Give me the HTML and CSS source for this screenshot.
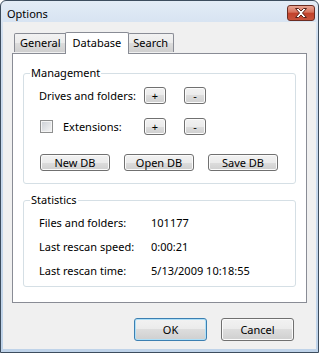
FILE: index.html
```html
<!DOCTYPE html>
<html lang="en">
<head>
    <meta charset="UTF-8">
    <title>Options</title>
    <link rel="stylesheet" href="styles.css">
</head>
<body>
    <div class="window">
        <div class="titlebar">
            <span class="title">Options</span>
            <div class="close">
                <svg width="14" height="10" viewBox="0 0 14 10">
                    <path d="M1.5 0.5 H4.5 L7 3 L9.5 0.5 H12.5 L8.5 5 L12.5 9.5 H9.5 L7 7 L4.5 9.5 H1.5 L5.5 5 Z" fill="#ffffff" stroke="#5a231a" stroke-width="1"/>
                </svg>
            </div>
        </div>
        <div class="client">
            <div class="tabs">
                <div class="tab">General</div>
                <div class="tab active">Database</div>
                <div class="tab">Search</div>
            </div>
            <div class="panel">
                <fieldset class="group management">
                    <legend>Management</legend>
                    <div class="row first">
                        <span class="label">Drives and folders:</span>
                        <div class="btn small">+</div>
                        <div class="btn small">-</div>
                    </div>
                    <div class="row">
                        <span class="check"></span>
                        <span class="label short">Extensions:</span>
                        <div class="btn small">+</div>
                        <div class="btn small">-</div>
                    </div>
                    <div class="db-buttons">
                        <div class="btn db">New DB</div>
                        <div class="btn db">Open DB</div>
                        <div class="btn db">Save DB</div>
                    </div>
                </fieldset>
                <fieldset class="group stats">
                    <legend>Statistics</legend>
                    <div class="stat"><span class="stat-name">Files and folders:</span><span>101177</span></div>
                    <div class="stat"><span class="stat-name">Last rescan speed:</span><span>0:00:21</span></div>
                    <div class="stat"><span class="stat-name">Last rescan time:</span><span>5/13/2009 10:18:55</span></div>
                </fieldset>
            </div>
            <div class="actions">
                <div class="btn dlg default">OK</div>
                <div class="btn dlg">Cancel</div>
            </div>
        </div>
    </div>
</body>
</html>
```

FILE: styles.css
```css
body {
    margin: 0;
    padding: 0;
    font-family: "Noto Sans", "Open Sans", sans-serif;
    font-size: 11px;
    color: #000000;
    background-color: #ffffff;
}
.window {
    width: 319px;
    height: 353px;
    box-sizing: border-box;
    border: 1px solid #3d4d5e;
    border-radius: 6px 6px 0 0;
    background: linear-gradient(#e3ecf6, #cddcee 40px, #bfd3e9);
    display: flex;
    flex-direction: column;
}
.titlebar {
    height: 21px;
    display: flex;
    align-items: center;
    justify-content: space-between;
    padding: 0 3px 0 6px;
}
.title {
    line-height: 16px;
    margin-top: 4px;
}
.close {
    width: 26px;
    height: 14px;
    margin-top: 3px;
    border: 1px solid #6b2c22;
    border-radius: 3px;
    background: linear-gradient(#e8a493, #d7735d 45%, #c2412a 50%, #c8533c);
    display: flex;
    align-items: center;
    justify-content: center;
}
.client {
    flex: 1;
    margin: 0 2px 3px 2px;
    background-color: #f0f0f0;
    display: flex;
    flex-direction: column;
    padding: 0 9px;
    white-space: nowrap;
}
.tabs {
    display: flex;
    align-items: flex-end;
    height: 21px;
    margin-top: 10px;
    padding-left: 2px;
    position: relative;
    z-index: 1;
}
.tab {
    height: 18px;
    line-height: 18px;
    padding: 0 5px;
    border: 1px solid #898c95;
    border-bottom: none;
    border-radius: 2px 2px 0 0;
    background: linear-gradient(#f2f2f2, #ebebeb 50%, #dddddd 50%, #cfcfcf);
    margin-bottom: 1px;
}
.tab.active {
    height: 21px;
    line-height: 19px;
    padding: 0 7px;
    background: #ffffff;
    margin: 0 -1px -1px -2px;
    position: relative;
    z-index: 2;
}
.tab.active + .tab {
    border-left: none;
    padding-left: 5px;
}
.panel {
    height: 248px;
    border: 1px solid #898c95;
    background-color: #ffffff;
    padding: 0 10px;
}
.group {
    margin: 0;
    border: 1px solid #d5dfe5;
    border-radius: 3px;
    padding: 0 0 0 15px;
}
.group legend {
    padding: 0 1px;
    margin-left: -9px;
    line-height: 16px;
}
.management {
    margin-top: 11px;
    padding-top: 6px;
    padding-bottom: 12px;
}
.row {
    display: flex;
    align-items: center;
    height: 17px;
    margin-top: 14px;
}
.row.first {
    margin-top: 0;
}
.label {
    width: 105px;
}
.label.short {
    width: 81px;
}
.check {
    width: 11px;
    height: 11px;
    border: 1px solid #8e8f8f;
    background: linear-gradient(135deg, #cbcfd5, #f6f6f6);
    box-shadow: inset 0 0 0 1px #f4f4f4;
    margin-left: 1px;
    margin-right: 10px;
}
.btn {
    box-sizing: border-box;
    border: 1px solid #707070;
    border-radius: 3px;
    background: linear-gradient(#f2f2f2, #ebebeb 50%, #dddddd 50%, #cfcfcf);
    box-shadow: inset 0 0 0 1px #fbfbfb;
    display: flex;
    align-items: center;
    justify-content: center;
}
.btn.small {
    width: 22px;
    height: 17px;
    margin-right: 18px;
}
.db-buttons {
    display: flex;
    gap: 14px;
    margin-top: 19px;
    margin-left: 1px;
}
.btn.db {
    width: 70px;
    height: 17px;
}
.stats {
    margin-top: 8px;
    padding-top: 7px;
    padding-bottom: 7px;
}
.stat {
    display: flex;
    line-height: 16px;
    margin-bottom: 8px;
}
.stat:last-child {
    margin-bottom: 0;
}
.stat-name {
    width: 112px;
}
.actions {
    display: flex;
    justify-content: flex-end;
    gap: 14px;
    margin-top: 15px;
    padding-right: 13px;
}
.btn.dlg {
    width: 73px;
    height: 23px;
}
.btn.default {
    border-color: #3c7fb1;
    box-shadow: inset 0 0 0 1px #aee0f8;
}
```
